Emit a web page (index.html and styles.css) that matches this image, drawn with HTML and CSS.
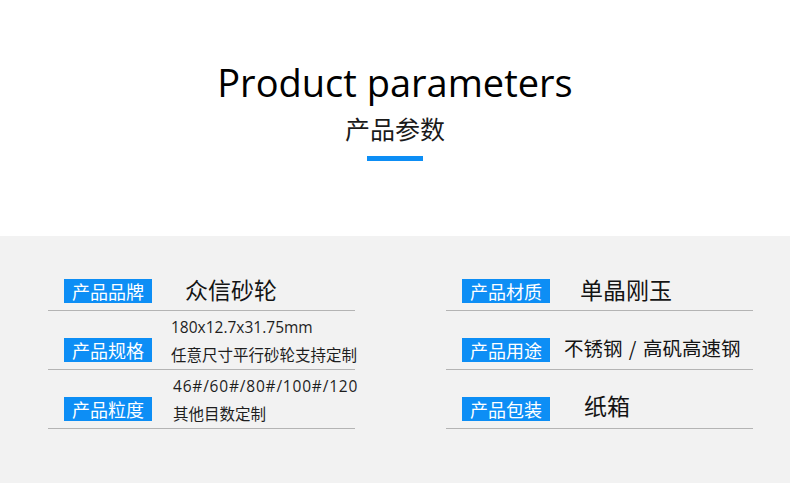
FILE: index.html
```html
<!DOCTYPE html>
<html lang="zh-CN">
<head>
    <meta charset="UTF-8">
    <meta name="viewport" content="width=device-width, initial-scale=1.0">
    <title>Product parameters</title>
    <link rel="stylesheet" href="styles.css">
</head>
<body>
    <div class="head">
        <h1 class="title">Product parameters</h1>
        <div class="subtitle">产品参数</div>
        <div class="bar"></div>
    </div>

    <div class="params">
        <div class="col">
            <div class="row">
                <span class="badge">产品品牌</span>
                <span class="value gap-33">众信砂轮</span>
            </div>
            <div class="row">
                <span class="badge">产品规格</span>
                <div class="multi gap-19">
                    <div>180x12.7x31.75mm</div>
                    <div>任意尺寸平行砂轮支持定制</div>
                </div>
            </div>
            <div class="row">
                <span class="badge">产品粒度</span>
                <div class="multi gap-21">
                    <div class="spaced">46#/60#/80#/100#/120</div>
                    <div>其他目数定制</div>
                </div>
            </div>
        </div>

        <div class="col">
            <div class="row">
                <span class="badge">产品材质</span>
                <span class="value gap-30">单晶刚玉</span>
            </div>
            <div class="row">
                <span class="badge">产品用途</span>
                <span class="value small gap-14">不锈钢 / 高矾高速钢</span>
            </div>
            <div class="row">
                <span class="badge">产品包装</span>
                <span class="value gap-34 up">纸箱</span>
            </div>
        </div>
    </div>
</body>
</html>
```

FILE: styles.css
```css
body {
    margin: 0;
    font-family: "Open Sans", "Noto Sans CJK SC", sans-serif;
    background-color: #fff;
    color: #111;
}
.head {
    height: 236px;
    box-sizing: border-box;
    padding-top: 58px;
    text-align: center;
}
.title {
    margin: 0;
    font-size: 38px;
    font-weight: 500;
    line-height: 48px;
    color: #000;
}
.subtitle {
    margin-top: 7px;
    font-family: "Noto Sans CJK SC", sans-serif;
    font-size: 25px;
    line-height: 30px;
    color: #1a1a1a;
}
.bar {
    width: 56px;
    height: 5px;
    margin: 13px auto 0;
    background-color: #0d8ef5;
}
.params {
    height: 247px;
    box-sizing: border-box;
    padding: 16px 0 0 48px;
    background-color: #f2f2f2;
    display: flex;
    gap: 91px;
}
.col {
    width: 307px;
}
.row {
    height: 59px;
    box-sizing: border-box;
    padding: 0 0 7px 16px;
    border-bottom: 1px solid #b4b4b4;
    display: flex;
    align-items: flex-end;
}
.badge {
    flex-shrink: 0;
    width: 88px;
    height: 24px;
    line-height: 24px;
    font-family: "Noto Sans CJK SC", sans-serif;
    font-size: 18px;
    text-align: center;
    color: #fff;
    background-color: #0d8ef5;
}
.value {
    margin-bottom: 2px;
    font-family: "Noto Sans CJK SC", sans-serif;
    font-size: 23px;
    line-height: 24px;
    color: #141414;
    white-space: nowrap;
}
.value.small {
    font-size: 19.5px;
    word-spacing: 2px;
}
.value.up {
    margin-bottom: 4px;
}
.multi {
    align-self: flex-start;
    padding-top: 2px;
    font-size: 15.5px;
    line-height: 28px;
    color: #1e1e1e;
    white-space: nowrap;
}
.multi .spaced {
    letter-spacing: 0.8px;
}
.gap-14 { margin-left: 14px; }
.gap-19 { margin-left: 19px; }
.gap-21 { margin-left: 21px; }
.gap-30 { margin-left: 30px; }
.gap-33 { margin-left: 33px; }
.gap-34 { margin-left: 34px; }
```
